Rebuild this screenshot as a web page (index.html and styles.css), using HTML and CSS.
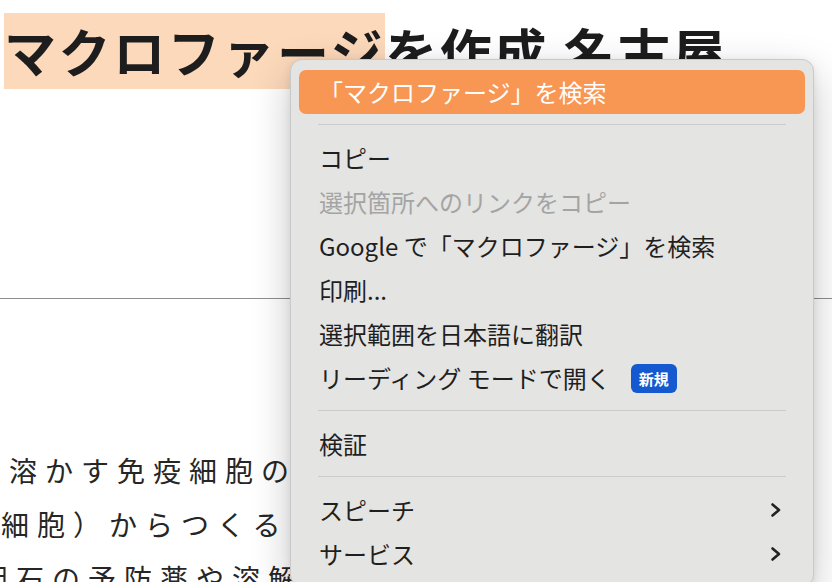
FILE: index.html
```html
<!DOCTYPE html>
<html lang="ja">
<head>
<meta charset="utf-8">
<title>マクロファージ</title>
<link rel="stylesheet" href="styles.css">
</head>
<body>
<main class="page">
  <h1 class="title"><span class="sel">マクロファージ</span>を作成 名古屋</h1>
  <hr class="rule">
  <div class="body-text">
    <p class="line l1">を溶かす免疫細胞の</p>
    <p class="line l2">細胞）からつくる</p>
    <p class="line l3">胆石の予防薬や溶解</p>
  </div>
</main>

<div class="menu" role="menu">
  <div class="item active">「マクロファージ」を検索</div>
  <div class="sep"></div>
  <div class="item">コピー</div>
  <div class="item disabled">選択箇所へのリンクをコピー</div>
  <div class="item">Google で「マクロファージ」を検索</div>
  <div class="item">印刷...</div>
  <div class="item">選択範囲を日本語に翻訳</div>
  <div class="item">リーディング モードで開く<span class="badge">新規</span></div>
  <div class="sep"></div>
  <div class="item">検証</div>
  <div class="sep"></div>
  <div class="item sub">スピーチ<svg class="chev" width="12" height="16" viewBox="0 0 12 16"><polyline points="2.5,2.5 9,8 2.5,13.5" fill="none" stroke="#222" stroke-width="2.6" stroke-linecap="round" stroke-linejoin="round"/></svg></div>
  <div class="item sub">サービス<svg class="chev" width="12" height="16" viewBox="0 0 12 16"><polyline points="2.5,2.5 9,8 2.5,13.5" fill="none" stroke="#222" stroke-width="2.6" stroke-linecap="round" stroke-linejoin="round"/></svg></div>
</div>
</body>
</html>
```

FILE: styles.css
```css
html, body {
  margin: 0;
  padding: 0;
  width: 832px;
  height: 582px;
  overflow: hidden;
  background: #ffffff;
  font-family: "Noto Sans CJK JP", "Noto Sans", sans-serif;
}

.page {
  position: relative;
  width: 832px;
}

.title {
  margin: 13px 0 0 4px;
  font-size: 52px;
  font-weight: 700;
  line-height: 76px;
  height: 76px;
  letter-spacing: 2.6px;
  color: #1d1d1d;
  white-space: nowrap;
}

.sel {
  display: inline-block;
  background: #fdd9bb;
  height: 76px;
}

.rule {
  margin: 209px 0 0 0;
  border: 0;
  border-top: 1px solid #8e8e8e;
  height: 0;
}

.body-text {
  margin-top: 144px;
  color: #262626;
  font-size: 28px;
  letter-spacing: 8px;
  line-height: 54px;
  white-space: nowrap;
}

.line {
  margin: 0;
  height: 54px;
}

.l1 { margin-left: -27px; }
.l2 { margin-left: 1px; }
.l3 { margin-left: -20px; }

.menu {
  position: absolute;
  left: 290px;
  top: 59px;
  width: 506px;
  padding: 10px 8px 10px 8px;
  background: #e4e4e3;
  border: 1px solid #c9c9c9;
  border-radius: 12px;
  box-shadow: 0 14px 40px rgba(0, 0, 0, 0.22), 0 2px 8px rgba(0, 0, 0, 0.08);
  font-size: 24px;
  color: #1f1f1f;
}

.item {
  display: flex;
  align-items: center;
  height: 44px;
  padding: 0 23px 0 20px;
  border-radius: 7px;
  white-space: nowrap;
  line-height: 44px;
}

.item.active {
  background: #f89654;
  color: #ffffff;
}

.item.disabled {
  color: #a4a4a4;
}

.sep {
  height: 1px;
  margin: 10px 19px 11px 19px;
  background: #cbcbcb;
}

.badge {
  display: inline-flex;
  align-items: center;
  justify-content: center;
  height: 29px;
  padding: 0 8px;
  margin-left: 20px;
  background: #1459d0;
  color: #ffffff;
  border-radius: 6px;
  font-size: 15px;
  font-weight: 700;
  line-height: 29px;
}

.chev {
  margin-left: auto;
  display: block;
}
```
